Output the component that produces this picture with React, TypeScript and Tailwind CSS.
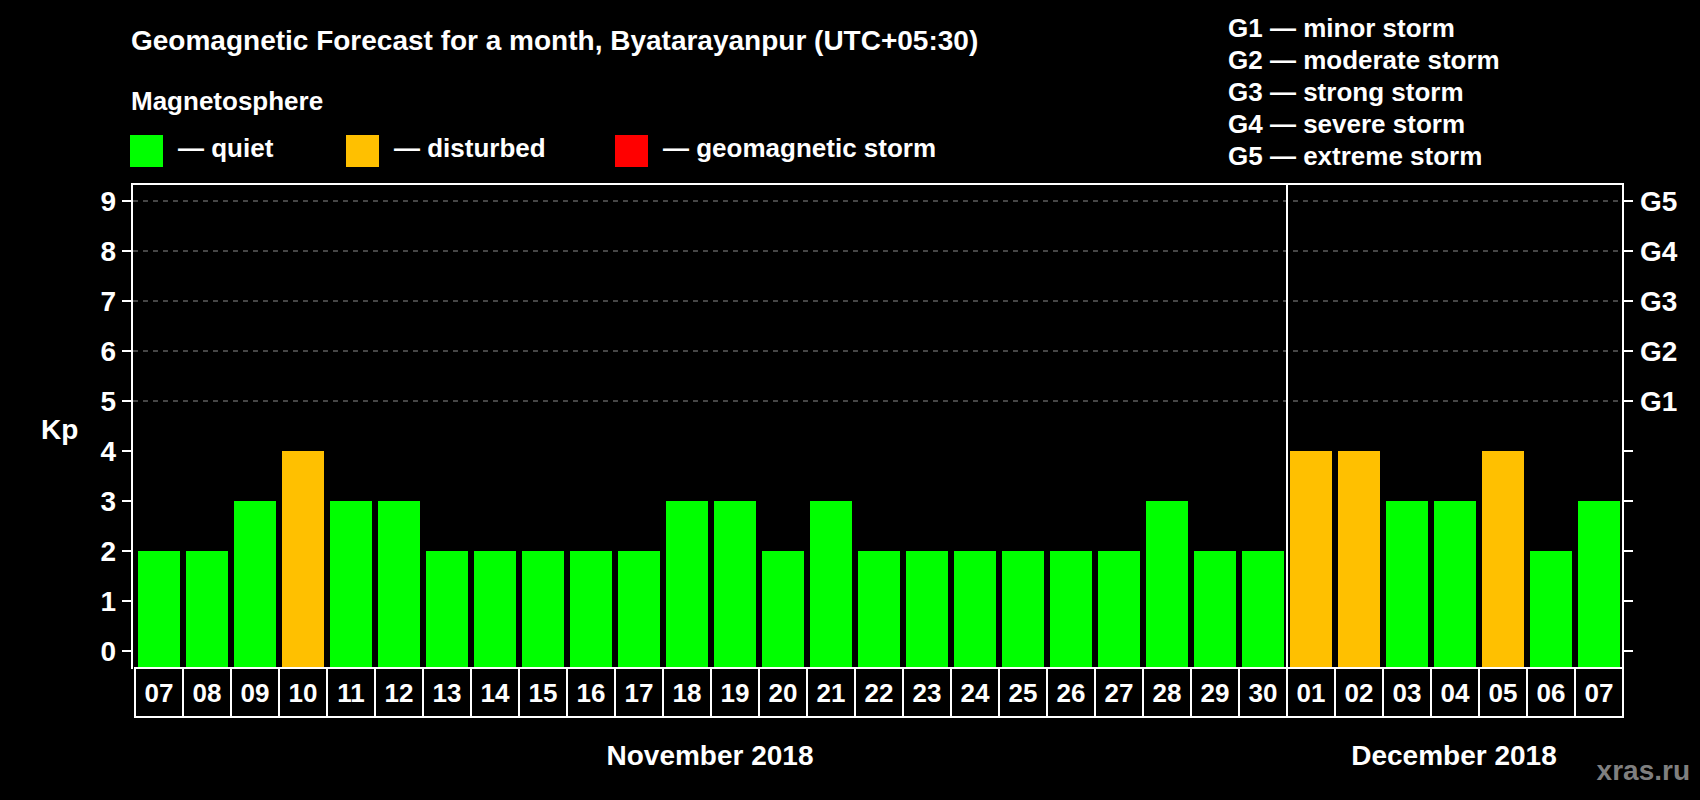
const nov = [2, 2, 3, 4, 3, 3, 2, 2, 2, 2, 2, 3, 3, 2, 3, 2, 2, 2, 2, 2, 2, 3, 2, 2];
const dec = [4, 4, 3, 3, 4, 2, 3];
const days = [
  ...nov.map((v, i) => ({ d: String(i + 7).padStart(2, "0"), v })),
  ...dec.map((v, i) => ({ d: String(i + 1).padStart(2, "0"), v })),
];

const X0 = 135;
const CW = 48;
const BASE = 651; // Kp = 0
const STEP = 50;
const RIGHT = X0 + CW * days.length;
const color = (v: number) => (v >= 5 ? "#ff0000" : v === 4 ? "#ffc000" : "#00ff00");

export default function App() {
  return (
    <div className="w-[1700px] h-[800px] bg-black overflow-hidden" style={{ fontFamily: '"Liberation Sans", Arial, sans-serif' }}>
      <svg width={1700} height={800} className="block" fontWeight="bold" fill="#fff">
        <text x={131} y={50} fontSize={28}>Geomagnetic Forecast for a month, Byatarayanpur (UTC+05:30)</text>
        <text x={131} y={110} fontSize={26}>Magnetosphere</text>

        <rect x={130} y={135} width={33} height={32} fill="#00ff00" />
        <text x={178} y={157} fontSize={26}>— quiet</text>
        <rect x={346} y={135} width={33} height={32} fill="#ffc000" />
        <text x={394} y={157} fontSize={26}>— disturbed</text>
        <rect x={615} y={135} width={33} height={32} fill="#ff0000" />
        <text x={663} y={157} fontSize={26}>— geomagnetic storm</text>

        {["minor", "moderate", "strong", "severe", "extreme"].map((s, i) => (
          <text key={s} x={1228} y={37 + i * 32} fontSize={26}>G{i + 1} — {s} storm</text>
        ))}

        {/* grid */}
        {[5, 6, 7, 8, 9].map(k => (
          <line key={k} x1={133} x2={RIGHT} y1={BASE - k * STEP} y2={BASE - k * STEP} stroke="#8c8c8c" strokeWidth={1} strokeDasharray="5 5" />
        ))}
        {Array.from({ length: 10 }, (_, k) => (
          <g key={k}>
            <line x1={122} x2={131} y1={BASE - k * STEP} y2={BASE - k * STEP} stroke="#fff" strokeWidth={2} />
            <line x1={RIGHT} x2={RIGHT + 10} y1={BASE - k * STEP} y2={BASE - k * STEP} stroke="#fff" strokeWidth={2} />
            <text x={116} y={BASE - k * STEP + 10} fontSize={28} textAnchor="end">{k}</text>
            {k >= 5 && <text x={1640} y={BASE - k * STEP + 10} fontSize={28}>G{k - 4}</text>}
          </g>
        ))}
        <text x={41} y={439} fontSize={28}>Kp</text>

        {/* bars */}
        {days.map((d, i) => (
          <rect key={i} x={X0 + i * CW + 3} y={BASE - d.v * STEP} width={42} height={668 - (BASE - d.v * STEP)} fill={color(d.v)} />
        ))}

        {/* frame */}
        <line x1={132} x2={132} y1={183} y2={669} stroke="#fff" strokeWidth={2} />
        <line x1={131} x2={RIGHT + 1} y1={184} y2={184} stroke="#fff" strokeWidth={2} />
        <line x1={RIGHT} x2={RIGHT} y1={183} y2={669} stroke="#fff" strokeWidth={2} />
        <line x1={1287} x2={1287} y1={183} y2={668} stroke="#fff" strokeWidth={2} />

        {/* day cells */}
        <rect x={X0} y={668} width={RIGHT - X0} height={49} fill="none" stroke="#fff" strokeWidth={2} />
        {days.map((d, i) => (
          <g key={i}>
            {i > 0 && <line x1={X0 + i * CW} x2={X0 + i * CW} y1={668} y2={717} stroke="#fff" strokeWidth={2} />}
            <text x={X0 + i * CW + CW / 2} y={702} fontSize={26} textAnchor="middle">{d.d}</text>
          </g>
        ))}

        <text x={710} y={765} fontSize={28} textAnchor="middle">November 2018</text>
        <text x={1454} y={765} fontSize={28} textAnchor="middle">December 2018</text>
        <text x={1690} y={780} fontSize={28} textAnchor="end" fill="#7f7f7f">xras.ru</text>
      </svg>
    </div>
  );
}
